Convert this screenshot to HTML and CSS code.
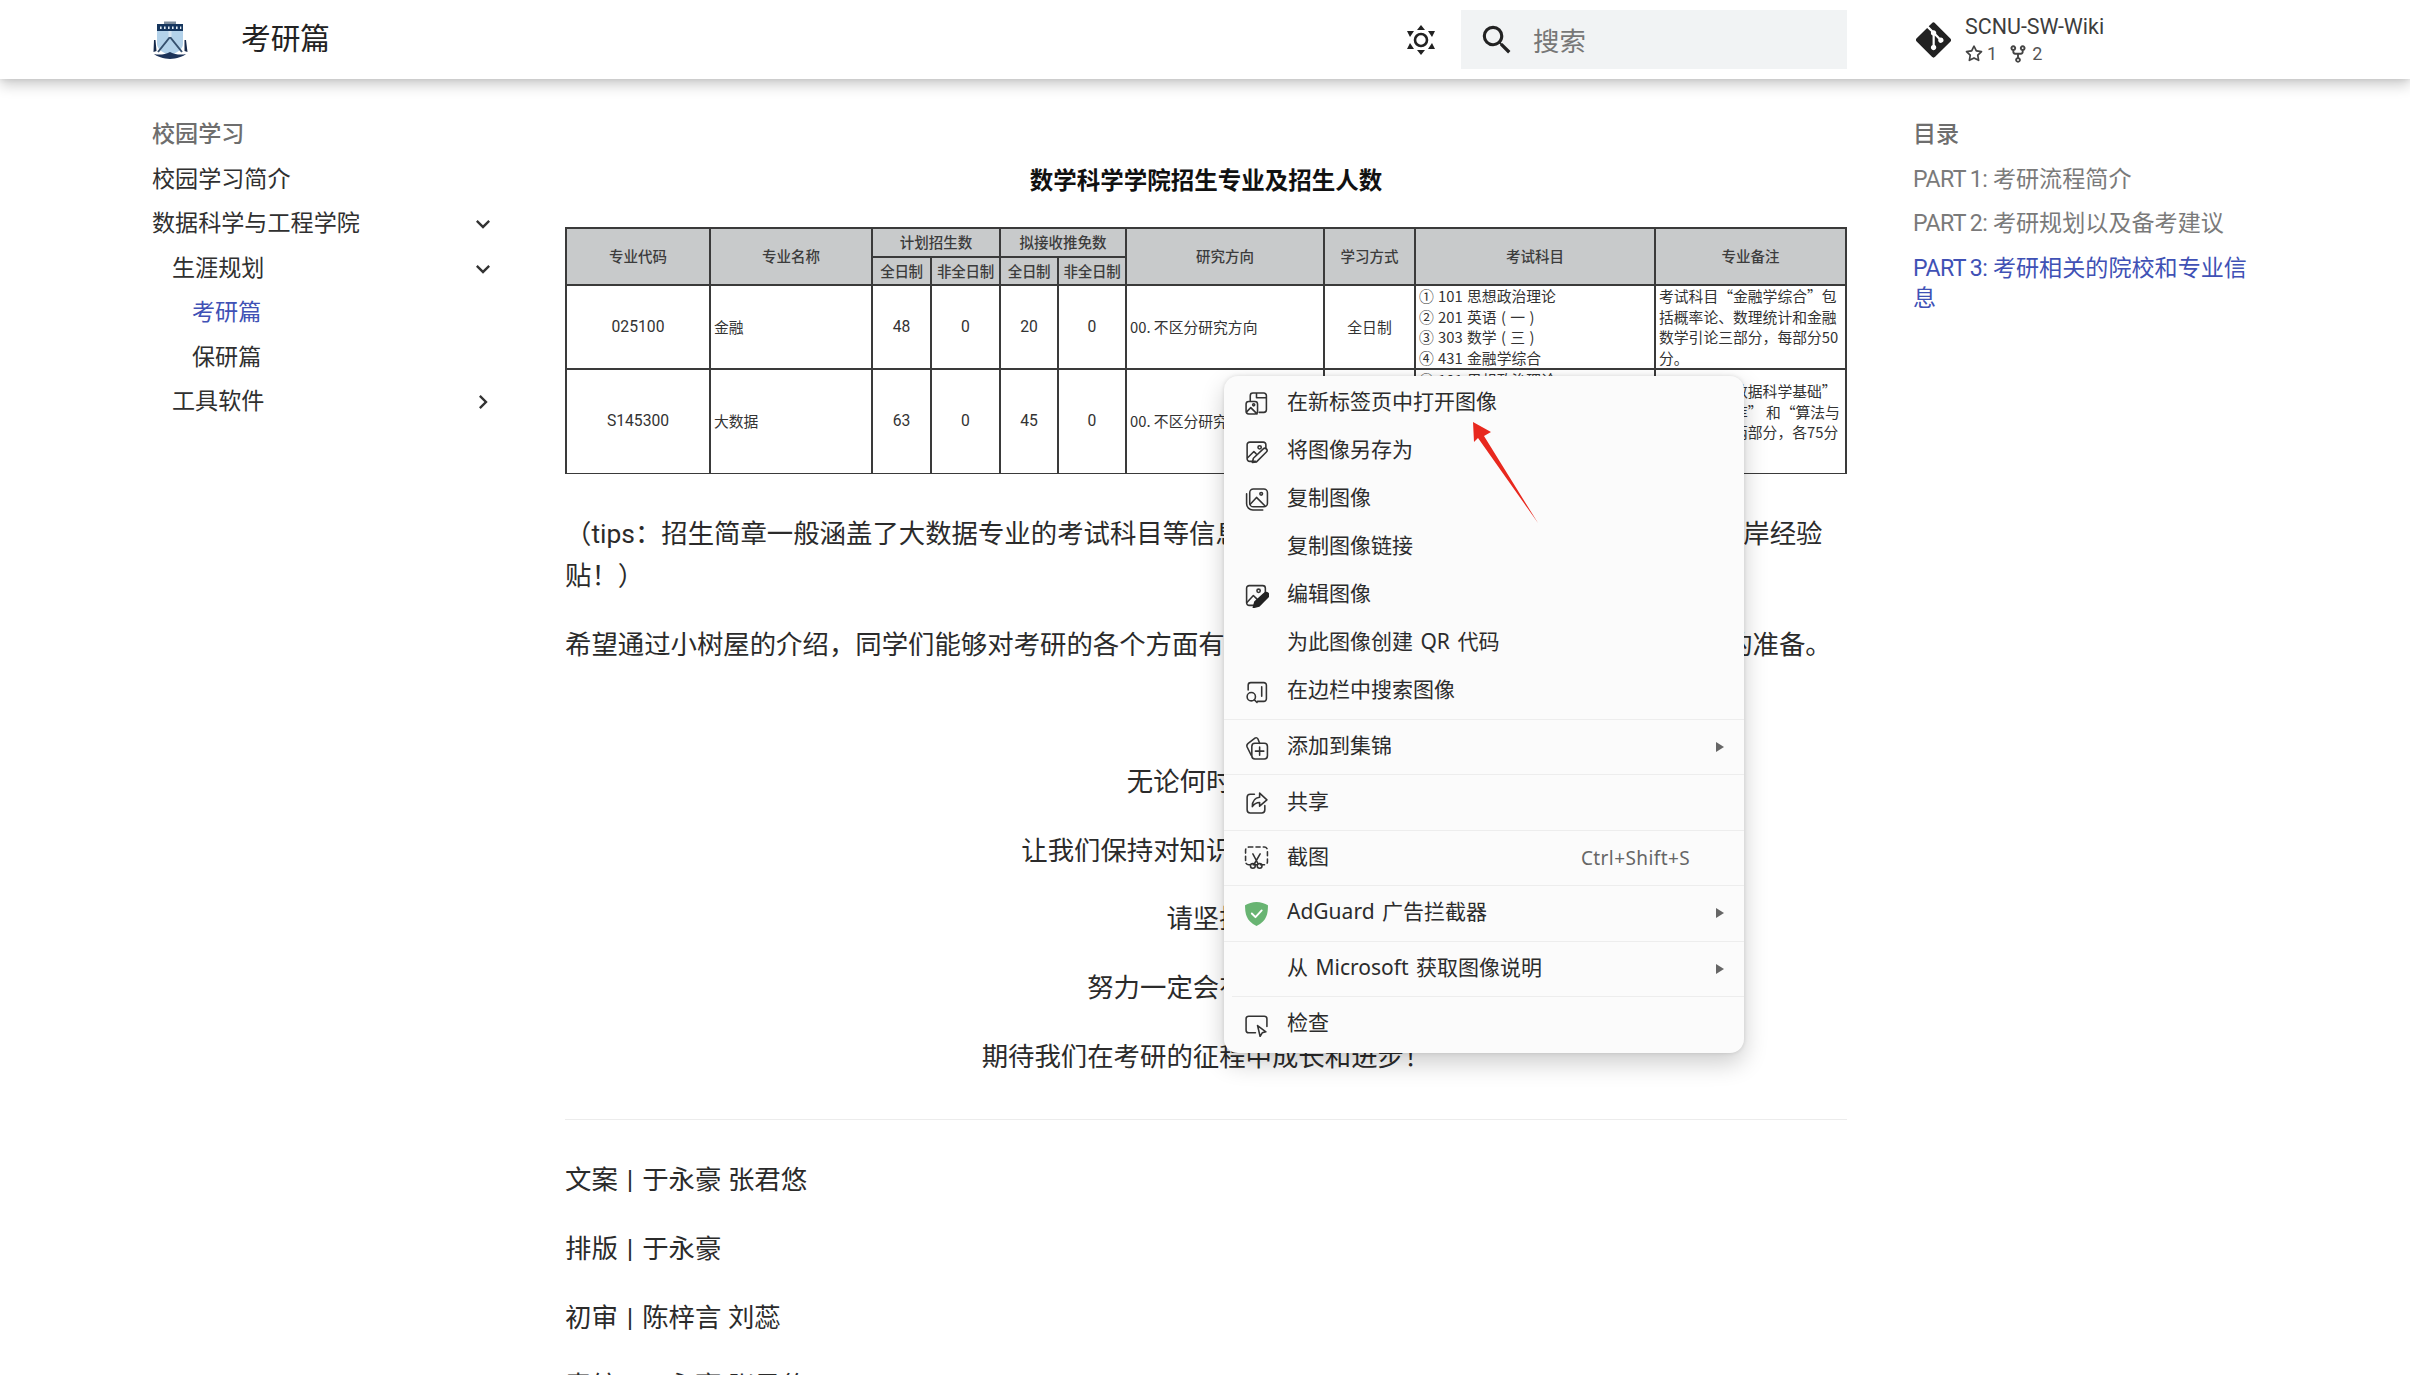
FILE: index.html
```html
<!DOCTYPE html>
<html lang="zh-CN">
<head>
<meta charset="utf-8">
<title>考研篇</title>
<link rel="stylesheet" href="styles.css">
</head>
<body>
<div class="page">
  <header class="topbar">
    <svg class="logo" viewBox="0 0 36 38" aria-hidden="true">
      <path d="M5 3h26v20c0 5-6 9-13 11C11 32 5 28 5 23z" fill="#b3d2ea"/>
      <path d="M12 0.500h12v2.500H12z" fill="#7d8c9c"/>
      <path d="M5 3h26v7H5z" fill="#16365e"/>
      <path d="M8 5.500h1.600v2.500H8zM12 5.500h1.600v2.500H12zM16 5.500h1.600v2.500H16zM20 5.500h1.600v2.500H20zM24 5.500h1.600v2.500H24zM28 5.500h1.300v2.500H28z" fill="#e3edf5"/>
      <path d="M6 31 18 16l12 15" fill="none" stroke="#35506f" stroke-width="2"/>
      <path d="M16.500 10h3v6h-3z" fill="#d8e6f2"/>
      <path d="M2 19h1.500l1 11-3 1zM32.500 19H34l1.500 12-3-1z" fill="#16294a"/>
      <path d="M2 33c5 1 10 1 16-2 6 3 11 3 16 2-2 2-10 5-16 5S4 35 2 33z" fill="#1d3358"/>
    </svg>
    <div class="site-title">考研篇</div>
    <svg class="theme-icon" viewBox="0 0 30 32" aria-hidden="true">
      <circle cx="15" cy="16" r="6" fill="none" stroke="#222" stroke-width="2.600"/>
      <path d="M15 1l4 5h-8zM15 31l-4-5h8zM1 7h7l-4 6zM29 7h-7l4 6zM1 25h7l-4-6zM29 25h-7l4-6z" fill="#222"/>
    </svg>
    <div class="search">
      <svg class="search-icon" viewBox="0 0 24 24" aria-hidden="true"><path d="M9.500 3A6.500 6.500 0 0 1 16 9.500c0 1.610-.59 3.090-1.560 4.230l.27.270h.79l5 5-1.500 1.500-5-5v-.79l-.27-.27A6.516 6.516 0 0 1 9.500 16 6.500 6.500 0 0 1 3 9.500 6.500 6.500 0 0 1 9.500 3m0 2C7 5 5 7 5 9.500S7 14 9.500 14 14 12 14 9.500 12 5 9.500 5Z"/></svg>
      <span class="search-text">搜索</span>
    </div>
    <div class="repo">
      <svg class="git-icon" viewBox="0 0 448 512" aria-hidden="true"><path d="M439.550 236.050L244 40.450a28.870 28.870 0 0 0-40.810 0l-40.660 40.630 51.520 51.520c27.060-9.140 52.680 16.770 43.390 43.680l49.660 49.660c34.230-11.800 61.180 31 35.470 56.690-26.490 26.490-70.210-2.870-56-37.340L240.220 199v121.850c25.300 12.540 22.260 41.850 9.080 55a34.340 34.340 0 0 1-48.550 0c-17.570-17.600-11.070-46.910 11.250-56v-123c-20.800-8.510-24.600-30.740-18.640-45L142.570 101 8.450 235.140a28.860 28.860 0 0 0 0 40.810l195.610 195.600a28.860 28.860 0 0 0 40.800 0l194.690-194.690a28.860 28.860 0 0 0 0-40.810z"/></svg>
      <div class="repo-info">
        <div class="repo-name">SCNU-SW-Wiki</div>
        <div class="repo-facts">
          <svg class="fact-icon" viewBox="0 0 16 16" aria-hidden="true"><path d="M8 .25a.75.75 0 0 1 .673.418l1.882 3.815 4.210.612a.75.75 0 0 1 .416 1.279l-3.046 2.970.719 4.192a.751.751 0 0 1-1.088.791L8 12.347l-3.766 1.980a.75.75 0 0 1-1.088-.79l.72-4.194L.818 6.374a.75.75 0 0 1 .416-1.280l4.210-.611L7.327.668A.75.75 0 0 1 8 .25Zm0 2.445L6.615 5.500a.75.75 0 0 1-.564.41l-3.097.45 2.240 2.184a.75.75 0 0 1 .216.664l-.528 3.084 2.769-1.456a.75.75 0 0 1 .698 0l2.770 1.456-.53-3.084a.75.75 0 0 1 .216-.664l2.240-2.183-3.096-.45a.75.75 0 0 1-.564-.41L8 2.694Z"/></svg>
          <span class="fact-num">1</span>
          <svg class="fact-icon fact-fork" viewBox="0 0 16 16" aria-hidden="true"><path d="M5 5.372v.878c0 .414.336.75.75.75h4.500a.75.75 0 0 0 .75-.75v-.878a2.250 2.250 0 1 1 1.500 0v.878a2.250 2.250 0 0 1-2.250 2.250h-1.500v2.128a2.251 2.251 0 1 1-1.500 0V8.500h-1.500A2.250 2.250 0 0 1 3.500 6.250v-.878a2.250 2.250 0 1 1 1.500 0ZM5 3.250a.75.75 0 1 0-1.500 0 .75.75 0 0 0 1.500 0Zm6.750.75a.75.75 0 1 0 0-1.500.75.75 0 0 0 0 1.500Zm-3 8.750a.75.75 0 1 0-1.500 0 .75.75 0 0 0 1.500 0Z"/></svg>
          <span class="fact-num">2</span>
        </div>
      </div>
    </div>
  </header>

  <div class="columns">
    <nav class="sidebar">
      <div class="nav-head">校园学习</div>
      <div class="nav-row">校园学习简介</div>
      <div class="nav-row"><span>数据科学与工程学院</span><svg class="chev" viewBox="0 0 24 24" aria-hidden="true"><path d="M7.410 8.580 12 13.170l4.590-4.590L18 10l-6 6-6-6z"/></svg></div>
      <div class="nav-row lv2"><span>生涯规划</span><svg class="chev" viewBox="0 0 24 24" aria-hidden="true"><path d="M7.410 8.580 12 13.170l4.590-4.590L18 10l-6 6-6-6z"/></svg></div>
      <div class="nav-row lv3 active">考研篇</div>
      <div class="nav-row lv3">保研篇</div>
      <div class="nav-row lv2"><span>工具软件</span><svg class="chev" viewBox="0 0 24 24" aria-hidden="true"><path d="M8.590 16.580 13.170 12 8.590 7.410 10 6l6 6-6 6z"/></svg></div>
    </nav>

    <main class="content">
      <div class="sheet-title">数学科学学院招生专业及招生人数</div>
      <table class="sheet">
        <colgroup>
          <col class="c1"><col class="c2"><col class="c3"><col class="c4"><col class="c5"><col class="c6"><col class="c7"><col class="c8"><col class="c9"><col class="c10">
        </colgroup>
        <thead>
          <tr class="h1">
            <th rowspan="2">专业代码</th><th rowspan="2">专业名称</th><th colspan="2">计划招生数</th><th colspan="2">拟接收推免数</th><th rowspan="2">研究方向</th><th rowspan="2">学习方式</th><th rowspan="2">考试科目</th><th rowspan="2">专业备注</th>
          </tr>
          <tr class="h2"><th>全日制</th><th>非全日制</th><th>全日制</th><th>非全日制</th></tr>
        </thead>
        <tbody>
          <tr class="r1">
            <td class="num">025100</td><td class="left">金融</td><td class="num">48</td><td class="num">0</td><td class="num">20</td><td class="num">0</td><td class="left">00. 不区分研究方向</td><td class="mid">全日制</td>
            <td class="top exam">① 101 思想政治理论<br>② 201 英语 ( 一 )<br>③ 303 数学 ( 三 )<br>④ 431 金融学综合</td>
            <td class="top">考试科目“金融学综合”包<br>括概率论、数理统计和金融<br>数学引论三部分，每部分50<br>分。</td>
          </tr>
          <tr class="r2">
            <td class="num">S145300</td><td class="left">大数据</td><td class="num">63</td><td class="num">0</td><td class="num">45</td><td class="num">0</td><td class="left">00. 不区分研究方向</td><td class="mid">全日制</td>
            <td class="top exam">① 101 思想政治理论<br>② 201 英语 ( 一 )<br>③ 302 数学 ( 二 )<br>④ 830 数据科学基础</td>
            <td class="top low">考试科目“数据科学基础”<br>包括“数据库”&nbsp;和“算法与<br>数据结构”两部分，各75分</td>
          </tr>
        </tbody>
      </table>

      <p class="para first">（tips：招生简章一般涵盖了大数据专业的考试科目等信息，同学们也可以多关注小树屋往期的保研上岸经验贴！）</p>
      <p class="para">希望通过小树屋的介绍，同学们能够对考研的各个方面有更深入的了解，为自己的未来规划做好充分的准备。</p>
      <p class="para blank">&nbsp;</p>
      <p class="para center">无论何时何地</p>
      <p class="para center">让我们保持对知识的渴望和追求</p>
      <p class="para center">请坚持</p>
      <p class="para center">努力一定会有回报的</p>
      <p class="para center">期待我们在考研的征程中成长和进步！</p>
      <hr class="rule">
      <p class="para">文案<span class="bar">|</span>于永豪 张君悠</p>
      <p class="para">排版<span class="bar">|</span>于永豪</p>
      <p class="para">初审<span class="bar">|</span>陈梓言 刘蕊</p>
      <p class="para">责编<span class="bar">|</span>于永豪 张君悠</p>
    </main>

    <aside class="toc">
      <div class="nav-head">目录</div>
      <div class="toc-row"><span class="part">PART 1:</span> 考研流程简介</div>
      <div class="toc-row"><span class="part">PART 2:</span> 考研规划以及备考建议</div>
      <div class="toc-row active"><span class="part">PART 3:</span> 考研相关的院校和专业信息</div>
    </aside>
  </div>

  <div class="menu">
    <div class="menu-top">
      <div class="item">
        <svg class="mi" viewBox="0 0 24 24" aria-hidden="true"><path d="M6 9V4.500A2.500 2.500 0 0 1 8.500 2H19a2.500 2.500 0 0 1 2.500 2.500V18a2.500 2.500 0 0 1-2.500 2.500h-4.500M12 2.500V6.500h9.500"/><rect x="2" y="10" width="11" height="12" rx="2.500"/><circle cx="9.300" cy="13.300" r="1"/><path d="M2.500 20l4-4 6 6"/></svg>
        <span>在新标签页中打开图像</span>
      </div>
      <div class="item">
        <svg class="mi" viewBox="0 0 24 24" aria-hidden="true"><path d="M11 21.500H5.500A2.500 2.500 0 0 1 3 19V5.500A2.500 2.500 0 0 1 5.500 3h13A2.500 2.500 0 0 1 21 5.500V9"/><circle cx="15" cy="8" r="1.600"/><path d="M3.500 18l6-6 2 2M8 22.500l1-4 9.500-9a2 2 0 0 1 3 3L12 22z"/></svg>
        <span>将图像另存为</span>
      </div>
      <div class="item">
        <svg class="mi" viewBox="0 0 24 24" aria-hidden="true"><rect x="5.500" y="2" width="17" height="17" rx="3.500"/><circle cx="16.500" cy="6.500" r="1.300"/><path d="M6 16.500l6-6.500 8.500 8.500"/><path d="M2.500 6.500V16a6 6 0 0 0 6 6H18"/></svg>
        <span>复制图像</span>
      </div>
      <div class="item">
        <i class="mi-gap"></i>
        <span>复制图像链接</span>
      </div>
      <div class="item">
        <svg class="mi" viewBox="0 0 24 24" aria-hidden="true"><path d="M10 21.500H5A2.500 2.500 0 0 1 2.500 19V5A2.500 2.500 0 0 1 5 2.500h13A2.500 2.500 0 0 1 20.500 5v6"/><circle cx="14" cy="7.500" r="1.600"/><path d="M3 18.500l6-6.500 3.500 3.500"/><path class="solid" d="M9 23.500l1.500-5.500 9-8a2 2 0 0 1 3.500 3.500l-8.500 8.500z"/></svg>
        <span>编辑图像</span>
      </div>
      <div class="item">
        <i class="mi-gap"></i>
        <span>为此图像创建 QR 代码</span>
      </div>
      <div class="item">
        <svg class="mi" viewBox="0 0 24 24" aria-hidden="true"><path d="M4 10.500V6a2.500 2.500 0 0 1 2.500-2.500H19A2.500 2.500 0 0 1 21.500 6v13a2.500 2.500 0 0 1-2.500 2.500h-6M17 7.500v9"/><circle cx="7" cy="17" r="4"/><path d="M10 20l2.500 2.500"/></svg>
        <span>在边栏中搜索图像</span>
      </div>
    </div>
    <div class="group">
      <svg class="mi" viewBox="0 0 24 24" aria-hidden="true"><rect x="7.500" y="8" width="15" height="15" rx="3"/><path d="M15 11.500v8M11 15.500h8"/><path d="M7 19.500l-4-8a3 3 0 0 1 1-3.500L10.500 3a2 2 0 0 1 3 1l1.500 4"/></svg>
      <span>添加到集锦</span><i class="sub"></i>
    </div>
    <div class="group">
      <svg class="mi" viewBox="0 0 24 24" aria-hidden="true"><path d="M10 4H6a3 3 0 0 0-3 3v12a3 3 0 0 0 3 3h11a3 3 0 0 0 3-3v-4"/><path d="M15 3l7 6.500-7 6V12c-3.500 0-5.500 1.500-7 4 0-5 2.500-8.500 7-9z"/></svg>
      <span>共享</span>
    </div>
    <div class="group">
      <svg class="mi" viewBox="0 0 24 24" aria-hidden="true"><rect class="dash" x="1.500" y="2" width="21" height="17" rx="3"/><circle cx="8.500" cy="20" r="2.300"/><circle cx="15" cy="20" r="2.300"/><path d="M10 18L15.500 8.500M13.500 18L8.500 8.500"/></svg>
      <span>截图</span><b class="keys">Ctrl+Shift+S</b>
    </div>
    <div class="group">
      <svg class="mi" viewBox="0 0 24 24" aria-hidden="true"><path class="shield" d="M12 1C8 1 4 2.500 1 4c0 8 1 15 11 20C22 19 23 12 23 4c-3-1.500-7-3-11-3z"/><path class="tick" d="M7.500 12l3.500 3.500 6-6.500"/></svg>
      <span>AdGuard 广告拦截器</span><i class="sub"></i>
    </div>
    <div class="group">
      <i class="mi-gap"></i>
      <span>从 Microsoft 获取图像说明</span><i class="sub"></i>
    </div>
    <div class="group last">
      <svg class="mi" viewBox="0 0 24 24" aria-hidden="true"><path d="M11 20H4.500A2.500 2.500 0 0 1 2 17.500v-11A2.500 2.500 0 0 1 4.500 4h15A2.500 2.500 0 0 1 22 6.500V14"/><path d="M13 13l8 6-3.500 1-2 3.500z"/></svg>
      <span>检查</span>
    </div>
    <svg class="arrow" viewBox="0 0 80 115" aria-hidden="true"><path d="M8 7 26 17 19 21 73 108 13 23 9 27z"/></svg>
  </div>
</div>
</body>
</html>
```

FILE: styles.css
```css
* { box-sizing: border-box; }
html, body { margin: 0; padding: 0; height: 100%; overflow: hidden; background: #fff; }
body {
  font-family: Roboto, "Noto Sans CJK SC", sans-serif;
  color: #2b2b2b;
}
.page { position: relative; width: 2410px; height: 1375px; overflow: hidden; }

/* Top bar */
.topbar {
  position: relative;
  z-index: 2;
  display: flex;
  align-items: center;
  height: 79px;
  padding: 0 220px 0 152px;
  background: #fff;
  box-shadow: 0 0 6px rgba(0,0,0,.1), 0 6px 13px rgba(0,0,0,.2);
}
.logo { width: 36px; height: 38px; flex: none; }
.site-title { flex: 1; margin-left: 53px; padding-bottom: 1px; line-height: 38px; font-size: 29.700px; color: #222; }
.theme-icon { width: 30px; height: 32px; flex: none; margin-right: 25px; }
.search {
  display: flex;
  align-items: center;
  width: 386px;
  height: 59px;
  padding-left: 17px;
  background: #f1f3f4;
  flex: none;
}
.search-icon { width: 38px; height: 38px; fill: #222; flex: none; }
.search-text { margin-left: 17px; font-size: 26.400px; color: #777; }
.repo { display: flex; align-items: center; width: 274px; margin-left: 69px; flex: none; }
.git-icon { width: 35px; height: 40px; fill: #222; flex: none; }
.repo-info { margin-left: 14px; }
.repo-name { font-size: 21.450px; line-height: 26px; color: #3d3d3d; }
.repo-facts { display: flex; align-items: center; height: 24px; margin-top: 2px; color: #555; font-size: 18px; }
.fact-icon { width: 18px; height: 18px; fill: #444; }
.fact-num { margin-left: 4px; }
.fact-fork { width: 20px; height: 20px; margin-left: 11px; }

/* Columns */
.columns {
  display: grid;
  grid-template-columns: 413px 1282px 340px;
  column-gap: 0;
  padding-left: 152px;
}
.sidebar { padding-top: 41px; width: 345px; font-size: 23.100px; line-height: 30px; }
.nav-head { height: 44.550px; line-height: 30px; font-size: 23.100px; font-weight: 500; color: #6e6e6e; }
.nav-row {
  display: flex;
  justify-content: space-between;
  align-items: center;
  height: 44.550px;
  padding-bottom: 14.550px;
  color: #303030;
}
.nav-row.lv2 { padding-left: 20px; }
.nav-row.lv3 { padding-left: 40px; }
.nav-row.active { color: #4051b5; }
.chev { width: 28px; height: 28px; fill: #333; flex: none; }

/* Content */
.content { padding-top: 83px; font-size: 26.400px; }
.sheet-title { height: 38px; line-height: 38px; text-align: center; font-size: 23.500px; font-weight: 700; color: #111; }
.sheet {
  table-layout: fixed;
  width: 1281px;
  margin-top: 27px;
  border-collapse: collapse;
  font-family: "Noto Sans CJK SC", sans-serif;
  font-size: 14.800px;
  color: #333;
}
.c1 { width: 144px; } .c2 { width: 162px; } .c3 { width: 59px; } .c4 { width: 69px; } .c5 { width: 58px; }
.c6 { width: 68px; } .c7 { width: 198px; } .c8 { width: 91px; } .c9 { width: 240px; } .c10 { width: 191px; }
.sheet th, .sheet td { border: 2px solid #3a3a3a; padding: 0; overflow: hidden; white-space: nowrap; line-height: 20.500px; }
.sheet th { background: #c8cacb; font-weight: 500; color: #3c3c3c; font-size: 14.500px; }
.sheet .h2 th { font-size: 14.500px; letter-spacing: -.3px; }
.h1 { height: 29px; }
.h2 { height: 28px; }
.r1 { height: 84px; }
.r2 { height: 104px; }
.r2 td { border-bottom-width: 1px; }
.sheet td.num { text-align: center; font-family: Roboto, "Noto Sans CJK SC", sans-serif; font-size: 15.700px; }
.sheet td.mid { text-align: center; }
.sheet td.left { padding-left: 3px; }
.sheet td.top { vertical-align: top; padding: 0 0 0 3px; }
.sheet td.exam { word-spacing: 1px; }
.sheet td.top.low { padding-top: 11px; }

.para { margin: 26.400px 0 0; line-height: 42.240px; color: #2b2b2b; }
.para.first { margin-top: 39.500px; }
.para.center { text-align: center; }
.bar { margin: 0 9px; }
.rule { height: 1px; margin: 41px 0 39.500px; border: 0; background: #ececec; }
.rule + .para { margin-top: 0; }

/* Table of contents */
.toc { padding-top: 41px; margin-left: 66px; width: 340px; font-size: 23.100px; color: #7a7a7a; }
.toc-row { margin-bottom: 14.550px; line-height: 30px; }
.toc-row.active { color: #4051b5; }
.part { letter-spacing: -.55px; word-spacing: -1px; }

/* Context menu (overlay) */
.menu {
  position: absolute;
  z-index: 3;
  left: 1224px;
  top: 376px;
  width: 520px;
  height: 677px;
  border-radius: 14px;
  background: #fbfbfb;
  box-shadow: 0 10px 24px rgba(0,0,0,.2), 0 0 4px rgba(0,0,0,.12);
  font-family: "Noto Sans", "Noto Sans CJK SC", sans-serif;
  font-size: 21px;
  word-spacing: 2px;
  color: #2c2c2c;
}
.menu-top { padding-top: 3px; height: 343px; }
.item, .group { display: flex; align-items: center; padding: 0 20px; }
.item { height: 48px; }
.group { height: 55.400px; border-top: 1px solid #ededed; }
.item > span, .group > span { padding-bottom: 6px; }
.group.last { position: relative; border-top-color: transparent; }
.group.last::before { content: ""; position: absolute; left: 8px; right: 0; top: -1px; height: 1px; background: #ededed; }
.mi {
  width: 25px;
  height: 25px;
  margin-right: 18px;
  flex: none;
  fill: none;
  stroke: #333;
  stroke-width: 1.500;
  stroke-linejoin: round;
  stroke-linecap: round;
}
.mi-gap { display: block; width: 25px; margin-right: 18px; flex: none; }
.mi .solid { fill: #222; stroke: #222; }
.mi .dash { stroke-dasharray: 4 3; }
.mi .shield { fill: #68b472; stroke: none; }
.mi .tick { stroke: #fff; stroke-width: 1.800; }
.sub {
  margin-left: auto;
  width: 0;
  height: 0;
  border-left: 8px solid #666;
  border-top: 5.500px solid transparent;
  border-bottom: 5.500px solid transparent;
}
.keys { margin-left: auto; margin-right: 34px; font-size: 19px; font-weight: 400; letter-spacing: .4px; color: #666; }
.arrow { position: absolute; left: 241px; top: 39px; width: 80px; height: 115px; fill: #e8281e; }
```
